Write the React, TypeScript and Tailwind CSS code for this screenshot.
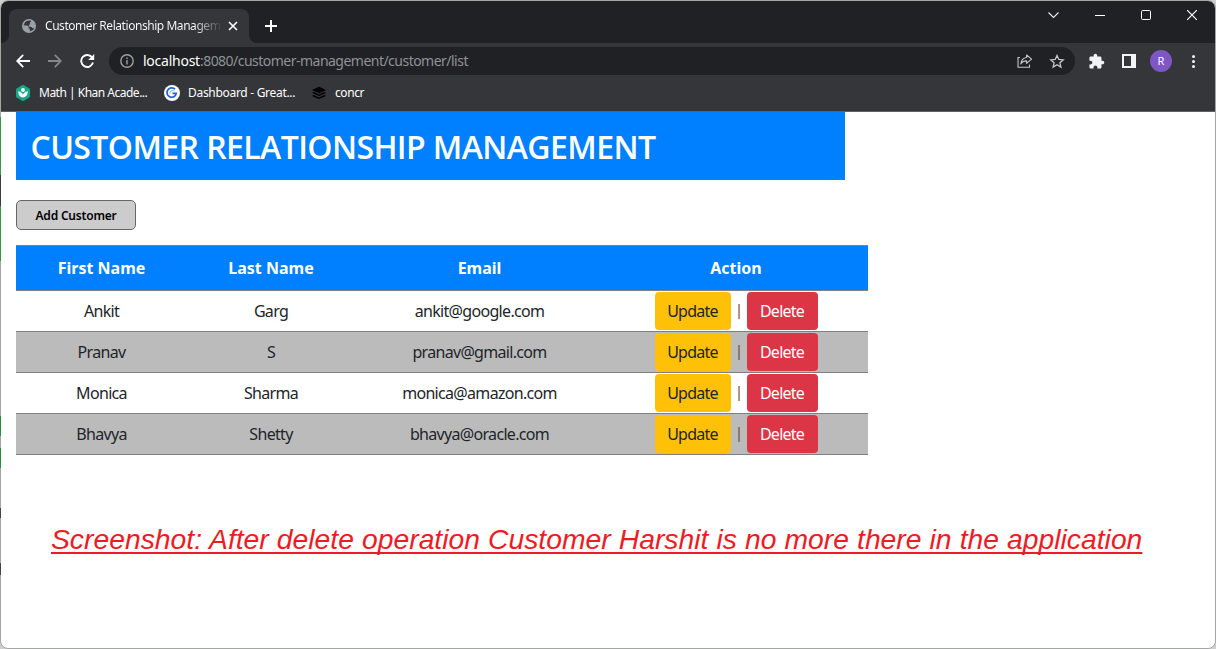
import type { ReactNode } from "react";

const customers = [
  { first: "Ankit", last: "Garg", email: "ankit@google.com" },
  { first: "Pranav", last: "S", email: "pranav@gmail.com" },
  { first: "Monica", last: "Sharma", email: "monica@amazon.com" },
  { first: "Bhavya", last: "Shetty", email: "bhavya@oracle.com" },
];

function Globe() {
  return (
    <svg width="14" height="14" viewBox="0 0 14 14">
      <circle cx="7" cy="7" r="7" fill="#9aa0a6" />
      <path d="M8.2 1.6C6.4 1.3 4.2 2 2.9 3.5L1.6 6.2l3.6.2 1.6 1.4-.3 1.4 1.2.5.2 2.6c2-.2 3.7-1.4 4.4-3.2l-1.7.2-1.1-1.2-2-.4-.8-1.3 1-1.2L8 5l-.2-1.5 1.4-.8z" fill="#35363a" />
    </svg>
  );
}

function TabStrip() {
  return (
    <div className="flex h-[42px] items-end pl-2">
      <div className="relative flex h-[34px] w-[240px] items-center rounded-t-lg bg-[#35363a] pl-[13px]">
        <svg className="absolute bottom-0 -left-2" width="8" height="8" viewBox="0 0 8 8">
          <path d="M8 0v8H0a8 8 0 0 0 8-8z" fill="#35363a" />
        </svg>
        <svg className="absolute -right-2 bottom-0" width="8" height="8" viewBox="0 0 8 8">
          <path d="M0 0v8h8a8 8 0 0 1-8-8z" fill="#35363a" />
        </svg>
        <Globe />
        <div className="ml-[9px] w-[175px] overflow-hidden bg-gradient-to-r from-white from-85% to-[#45464a] bg-clip-text text-xs tracking-[-0.45px] whitespace-nowrap text-transparent">
          Customer Relationship Managem
        </div>
        <svg className="ml-2" width="10" height="10" viewBox="0 0 10 10" stroke="#fff" strokeWidth="1.6">
          <path d="M1 1l8 8M9 1l-8 8" />
        </svg>
      </div>
      <svg className="mb-[11px] ml-4" width="12" height="12" viewBox="0 0 12 12" stroke="#fff" strokeWidth="2">
        <path d="M6 0v12M0 6h12" />
      </svg>
      <div className="ml-auto flex h-full items-start gap-9 pt-[9px] pr-[18px]">
        <svg width="11" height="10" viewBox="0 0 11 10" fill="none" stroke="#e8eaed" strokeWidth="1.1">
          <path d="M.5 2.5l5 5 5-5" />
        </svg>
        <svg width="10" height="10" viewBox="0 0 10 10" stroke="#fff">
          <path d="M0 5.5h10" />
        </svg>
        <svg width="10" height="10" viewBox="0 0 10 10" fill="none" stroke="#fff">
          <rect x=".5" y=".5" width="9" height="9" rx="1.2" />
        </svg>
        <svg width="10" height="10" viewBox="0 0 10 10" stroke="#fff" strokeWidth="1.2">
          <path d="M0 0l10 10M10 0L0 10" />
        </svg>
      </div>
    </div>
  );
}

function Toolbar() {
  return (
    <div className="flex h-9 items-center pl-[15px]">
      <svg width="14" height="14" viewBox="0 0 14 14" fill="none" stroke="#fff" strokeWidth="1.8">
        <path d="M14 7H1.5M7.2 .8L1.2 7l6 6.2" />
      </svg>
      <svg className="ml-[18px]" width="14" height="14" viewBox="0 0 14 14" fill="none" stroke="#85868a" strokeWidth="1.8">
        <path d="M0 7h12.5M6.8 .8l6 6.2-6 6.2" />
      </svg>
      <svg className="ml-[18px]" width="15" height="14" viewBox="0 0 15 14" fill="none" stroke="#fff" strokeWidth="1.9">
        <path d="M12.2 3.6A6 6 0 1 0 13 8.6" />
        <path d="M14.2 0v6h-6z" fill="#fff" stroke="none" />
      </svg>
      <div className="ml-[14px] flex h-7 w-[966px] items-center rounded-full bg-[#202124] pr-[10px] pl-[11px]">
        <svg width="14" height="14" viewBox="0 0 14 14" fill="none" stroke="#9aa0a6" strokeWidth="1.4">
          <circle cx="7" cy="7" r="6.2" />
          <path d="M7 6v4.400M7 3.400v1.500" />
        </svg>
        <div className="ml-[9px] text-sm tracking-[-0.52px] whitespace-nowrap text-[#8f9296]">
          <span className="tracking-[-0.25px] text-white">localhost</span>:8080/customer-management/customer/list
        </div>
        <svg className="ml-auto" width="16" height="14" viewBox="0 0 16 14" fill="none" stroke="#c4c7ca" strokeWidth="1.1">
          <path d="M3 3.500H1v9.700h11.500V10.500" />
          <path d="M9.600 1l5 4.200-5 4.200V6.900C7 6.900 5 7.800 3.800 9.900 4.200 6.500 6 4 9.600 3.500z" strokeLinejoin="round" />
        </svg>
        <svg className="ml-4" width="16" height="15" viewBox="0 0 16 15" fill="none" stroke="#c4c7ca" strokeWidth="1.3">
          <path d="M8 1.500l1.800 4 4.400.4-3.300 2.900 1 4.300L8 10.800l-3.900 2.300 1-4.300L1.800 5.900l4.400-.4z" />
        </svg>
      </div>
      <svg className="ml-[13px]" width="17" height="17" viewBox="0 0 24 24" fill="#f1f3f4">
        <path d="M20.500 11H19V7c0-1.100-.9-2-2-2h-4V3.500C13 2.120 11.880 1 10.500 1S8 2.120 8 3.500V5H4c-1.100 0-1.990.9-1.990 2v3.800H3.500c1.490 0 2.700 1.210 2.700 2.700s-1.210 2.700-2.700 2.700H2V20c0 1.100.9 2 2 2h3.800v-1.500c0-1.490 1.210-2.700 2.700-2.700 1.490 0 2.700 1.210 2.700 2.700V22H17c1.100 0 2-.9 2-2v-4h1.500c1.380 0 2.500-1.120 2.500-2.500S21.880 11 20.500 11z" />
      </svg>
      <svg className="ml-[17px]" width="14" height="14" viewBox="0 0 14 14">
        <path d="M0 0h14v14H0zM2 2v10h7V2z" fill="#f1f3f4" fillRule="evenodd" />
      </svg>
      <div className="ml-[14px] flex size-[22px] items-center justify-center rounded-full bg-[#7e57c2] text-[11px] text-white">R</div>
      <svg className="ml-5" width="4" height="13" viewBox="0 0 4 13" fill="#f1f3f4">
        <circle cx="1.500" cy="1.5" r="1.500" />
        <circle cx="1.500" cy="6.500" r="1.500" />
        <circle cx="1.500" cy="11.500" r="1.500" />
      </svg>
    </div>
  );
}

function Bookmarks() {
  return (
    <div className="flex h-8 items-center pb-[4px] pl-[15px] text-xs whitespace-nowrap text-white">
      <svg width="14" height="16" viewBox="0 0 14 16">
        <path d="M6 .3Q7-.2 8 .3l5 2.900q1 .5 1 1.600v6.400q0 1.100-1 1.600l-5 2.900q-1 .5-2 0l-5-2.900q-1-.5-1-1.600V4.800q0-1.100 1-1.600z" fill="#14a88a" />
        <circle cx="7" cy="5" r="1.900" fill="#fff" />
        <path d="M2.200 6.200C5 6.600 7 8.300 7 10c0-1.700 2-3.400 4.800-3.800 0 3.800-2 6.200-4.800 6.200s-4.800-2.400-4.800-6.200z" fill="#fff" />
      </svg>
      <span className="ml-[9px] w-[109px] tracking-[-0.5px]">Math | Khan Acade...</span>
      <svg className="ml-4" width="16" height="16" viewBox="0 0 16 16">
        <circle cx="8" cy="8" r="8" fill="#fff" />
        <path d="M11 4.200A4.700 4.700 0 1 0 12.300 8.400H8.500" fill="none" stroke="#1f62d0" strokeWidth="1.700" />
        <path d="M10.400 6.200A2.800 2.800 0 0 0 5.700 8.500" fill="none" stroke="#6d9df0" strokeWidth=".8" />
      </svg>
      <span className="ml-2 w-[107px] tracking-[-0.3px]">Dashboard - Great...</span>
      <svg className="ml-[17px]" width="14" height="14" viewBox="0 0 14 14" fill="#000">
        <path d="M7 .8l7 3.200-7 3.200L0 4z" />
        <path d="M1.700 6L7 8.400 12.300 6l1.700.9-7 3.200-7-3.200z" />
        <path d="M1.700 9L7 11.400 12.300 9l1.700.9-7 3.200-7-3.200z" />
      </svg>
      <span className="ml-[9px] tracking-[-0.4px]">concr</span>
    </div>
  );
}

function ActionButton({ tone, children }: { tone: string; children: ReactNode }) {
  return <button className={"h-[38px] rounded-[4px] text-base tracking-[-0.75px] " + tone}>{children}</button>;
}

const columns = "grid grid-cols-[171px_168px_249px_264px] items-center text-center";

function CustomerTable() {
  return (
    <div className="mt-[15px] w-[852px] border-t border-[#808080] text-base text-[#212529]">
      <div className={columns + " h-[45px] border-b border-[#808080] bg-[#0080ff] font-bold text-white"}>
        <div>First Name</div>
        <div>Last Name</div>
        <div>Email</div>
        <div>Action</div>
      </div>
      {customers.map((c) => (
        <div key={c.email} className={columns + " h-[41px] border-b border-[#808080] tracking-[-0.68px] even:bg-white odd:bg-[#bbb]"}>
          <div>{c.first}</div>
          <div>{c.last}</div>
          <div>{c.email}</div>
          <div className="flex items-center justify-center">
            <ActionButton tone="w-[76px] bg-[#ffc107] text-[#212529]">Update</ActionButton>
            <span className="-mt-[3px] w-4 pl-px text-center text-[14.500px] tracking-normal text-[#6b4d25]">|</span>
            <ActionButton tone="w-[71px] bg-[#dc3545] text-white">Delete</ActionButton>
          </div>
        </div>
      ))}
    </div>
  );
}

function WindowEdge() {
  return (
    <div className="absolute top-[117px] left-0 flex w-px flex-col">
      <div className="h-[58px] bg-[#35984a]" />
      <div className="h-[31px] bg-[#3c3a42]" />
      <div className="h-[55px] bg-[#35984a]" />
      <div className="mt-[155px] h-[20px] bg-[#2f8a43]" />
      <div className="mt-[12px] h-[20px] bg-[#2f8a43]" />
      <div className="mt-[40px] h-[10px] bg-[#444]" />
      <div className="mt-[45px] h-[12px] bg-[#444]" />
    </div>
  );
}

export default function App() {
  return (
    <div className="relative h-[649px] w-[1216px] bg-[#cfcfcf] font-['Noto_Sans',sans-serif]">
      <div className="flex h-full flex-col overflow-hidden rounded-lg border border-[#a3a6a3] bg-white">
        <div className="h-[111px] shrink-0 border-b border-[#5f6062] bg-[#202124]">
          <TabStrip />
          <div className="h-[68px] bg-[#35363a]">
            <Toolbar />
            <Bookmarks />
          </div>
        </div>
        <main className="pl-[15px]">
          <h1 className="flex h-[68px] w-[829px] items-center bg-[#0080ff] pt-[1px] pl-[14.500px] font-['Open_Sans',sans-serif] text-[32px] font-semibold tracking-[-0.59px] whitespace-nowrap text-white">
            CUSTOMER RELATIONSHIP MANAGEMENT
          </h1>
          <button className="mt-5 block h-[30px] w-[120px] rounded-[5px] border border-[#666] bg-[#ccc] pt-[2px] text-xs font-semibold tracking-[-0.2px] text-black">
            Add Customer
          </button>
          <CustomerTable />
          <p className="mt-[67px] pl-[35px] font-['Liberation_Sans',sans-serif] text-[28.300px] leading-[34px] [word-spacing:0.200px] whitespace-nowrap text-[#ed1c24] italic underline decoration-2 underline-offset-[3px] [text-decoration-skip-ink:none]">
            Screenshot: After delete operation Customer Harshit is no more there in the application
          </p>
        </main>
      </div>
      <WindowEdge />
    </div>
  );
}
